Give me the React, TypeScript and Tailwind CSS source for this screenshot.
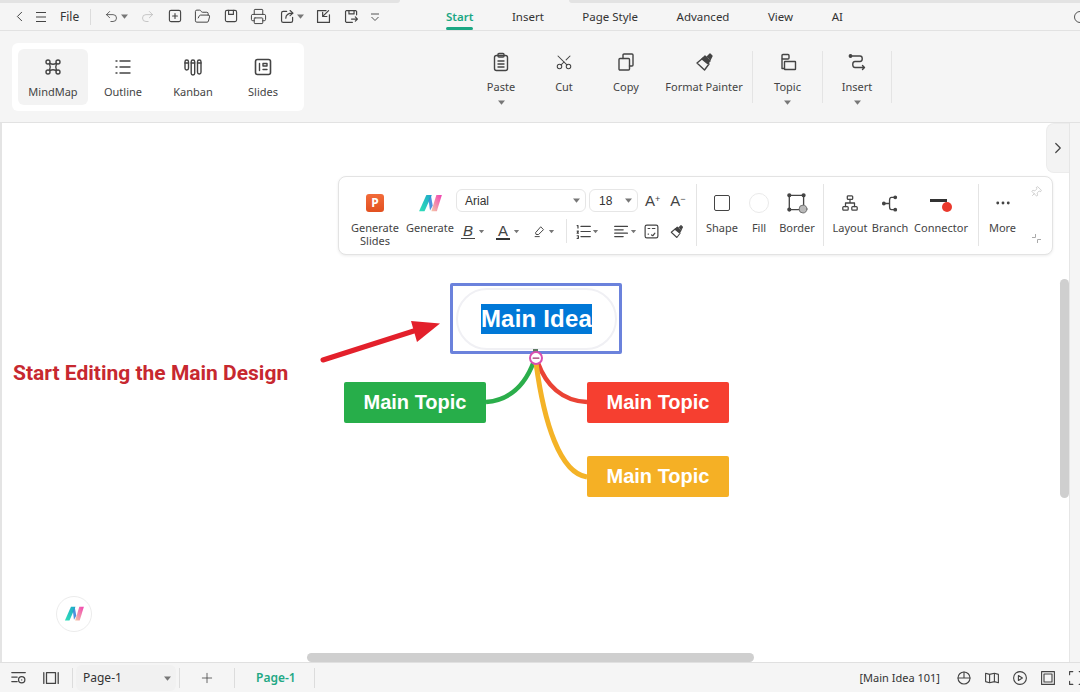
import type { ReactNode } from "react";
import {
  ChevronLeft,
  ChevronRight,
  Ellipsis,
  FolderOpen,
  Minus,
  Pin,
  Plus,
  Printer,
  Redo2,
  Scissors,
  Undo2,
} from "lucide-react";

const Caret = ({ className = "" }: { className?: string }) => (
  <svg width="7" height="5" viewBox="0 0 7 5" className={`shrink-0 ${className}`}>
    <path d="M0 0.5h7L3.5 4.8z" fill="#777" />
  </svg>
);

const Svg = ({ size = 20, children }: { size?: number; children: ReactNode }) => (
  <svg width={size} height={size} viewBox="0 0 20 20" fill="none" stroke="#444" strokeWidth="1.4" strokeLinecap="round" strokeLinejoin="round" className="shrink-0">
    {children}
  </svg>
);

const MLogo = ({ size = 26 }: { size?: number }) => (
  <svg width={size} height={size * 0.76} viewBox="0 0 26 20">
    <defs>
      <linearGradient id="mA" x1="0" y1="1" x2="1" y2="0">
        <stop offset="0" stopColor="#2fe0b8" />
        <stop offset="1" stopColor="#1fa8c8" />
      </linearGradient>
      <linearGradient id="mB" x1="0" y1="1" x2="1" y2="0">
        <stop offset="0" stopColor="#f5c8a8" />
        <stop offset="1" stopColor="#f040b0" />
      </linearGradient>
    </defs>
    <path d="M1 19 L9 1 H15 L7 19 Z" fill="url(#mA)" />
    <path d="M11.5 7 L14 1.5 L16 13 L13 18 Z" fill="#2f7fd8" opacity="0.85" />
    <path d="M14.5 19 L20 1 H26 L20.5 19 Z" fill="url(#mB)" />
  </svg>
);

const quickIcons: { id: string; node: ReactNode }[] = [
  { id: "new", node: <Svg size={16}><rect x="3" y="3" width="14" height="14" rx="2" /><path d="M10 7v6M7 10h6" /></Svg> },
  { id: "open", node: <FolderOpen size={17} strokeWidth={1.4} color="#444" /> },
  { id: "save", node: <Svg size={16}><rect x="3" y="3" width="14" height="14" rx="2" /><path d="M7 3v5h6V3" /></Svg> },
  { id: "print", node: <Printer size={17} strokeWidth={1.4} color="#444" /> },
];

const TopStrip = () => (
  <div className="flex h-[3px] shrink-0 bg-[#f5f5f5]">
    <div className="w-[400px] rounded-br-[3px] bg-[#e3e3e3]" />
    <div className="ml-[169px] flex-1 rounded-bl-[3px] bg-[#e3e3e3]" />
  </div>
);

const TitleBar = () => (
  <div className="flex h-[28px] items-center border-b border-[#e2e2e2] bg-[#f5f5f5] text-[12px] text-[#333]">
    <ChevronLeft size={17} strokeWidth={1.4} color="#444" className="ml-[11px]" />
    <svg width="12" height="12" viewBox="0 0 12 12" stroke="#444" strokeWidth="1.1" className="ml-[7px]">
      <path d="M1 1.5h10M1 6h10M1 10.5h10" />
    </svg>
    <span className="ml-[13px] w-[22px]">File</span>
    <div className="ml-[8px] h-[16px] w-px bg-[#dcdcdc]" />
    <Undo2 size={15} strokeWidth={1.3} color="#444" className="ml-[13px]" />
    <Caret className="ml-[2px]" />
    <Redo2 size={15} strokeWidth={1.3} color="#bbb" className="ml-[12px]" />
    <div className="ml-[11px] flex w-[101px] justify-between">
      {quickIcons.map((q) => (
        <span key={q.id} className="flex w-[17px] justify-center">{q.node}</span>
      ))}
    </div>
    <span className="ml-[12px] flex">
      <Svg size={17}><path d="M16 11v4a2 2 0 0 1-2 2H5a2 2 0 0 1-2-2V6a2 2 0 0 1 2-2h4" /><path d="M8 12c0-4 3-6 8-6M13 3l3.5 3L13 9" /></Svg>
    </span>
    <Caret className="ml-[1px]" />
    <span className="ml-[11px] flex">
      <Svg size={17}><path d="M3 3h10M3 3v14h14V8" /><path d="M16 3l-6 6M9 5v5h5" /></Svg>
    </span>
    <span className="ml-[11px] flex">
      <Svg size={17}><path d="M16 8V4l-1-1H4L3 4v12l1 1h7" /><path d="M7 3v4h6V3M10 13h7M14.5 10.5 17 13l-2.5 2.5" /></Svg>
    </span>
    <svg width="10" height="10" viewBox="0 0 10 10" stroke="#555" fill="none" className="ml-[10px]">
      <path d="M1 2h8M1.5 5 5 8.5 8.5 5" />
    </svg>
    <div className="ml-[66px] flex h-full gap-[38.5px] text-[11.5px]">
      {["Start", "Insert", "Page Style", "Advanced", "View", "AI"].map((tab) => (
        <span
          key={tab}
          className={
            tab === "Start"
              ? "relative flex items-center font-semibold text-[#1ba784]"
              : "flex items-center"
          }
        >
          {tab}
          {tab === "Start" && <span className="absolute bottom-0 left-0 h-[3px] w-full rounded-sm bg-[#1ba784]" />}
        </span>
      ))}
    </div>
    <span className="ml-auto -mr-[6px] h-[12px] w-[12px] rounded-full border border-[#555]" />
  </div>
);

const viewModes: { label: string; icon: ReactNode }[] = [
  {
    label: "MindMap",
    icon: (
      <Svg>
        <circle cx="5" cy="5" r="2" /><circle cx="15" cy="5" r="2" /><circle cx="5" cy="15" r="2" /><circle cx="15" cy="15" r="2" />
        <path d="M7 6.5c2 1 4 1 6 0M7 13.5c2-1 4-1 6 0M6.5 7c1 2 1 4 0 6M13.5 7c-1 2-1 4 0 6" />
      </Svg>
    ),
  },
  {
    label: "Outline",
    icon: (
      <Svg>
        <path d="M7 4h10M7 10h10M7 16h10" /><path d="M3 4h1M3 10h1M3 16h1" />
      </Svg>
    ),
  },
  {
    label: "Kanban",
    icon: (
      <Svg>
        <rect x="2" y="3" width="3.5" height="10" rx="1.7" /><rect x="8.2" y="3" width="3.5" height="15" rx="1.7" /><rect x="14.5" y="3" width="3.5" height="14" rx="1.7" />
        <path d="M2 6h3.5M8.2 6h3.5M14.5 6h3.5" />
      </Svg>
    ),
  },
  {
    label: "Slides",
    icon: (
      <Svg>
        <rect x="2.5" y="2.5" width="15" height="15" rx="2" strokeWidth="1.6" />
        <path d="M6.5 6.5v7M10 6.5h4v2.5h-4zM10 12.5h4" />
      </Svg>
    ),
  },
];

const brushPaths = (
  <>
    <path d="M3 11l6-5 6 6-4.5 6z" />
    <path d="M8 7l3-3 5 5-2.5 2.5z" fill="#444" />
    <path d="M13 5l3-3 2 2-2 4" fill="#444" />
  </>
);

const ribbonItems: { label: string; width: string; caret?: boolean; icon: ReactNode }[] = [
  {
    label: "Paste",
    width: "w-[62px]",
    caret: true,
    icon: (
      <Svg>
        <rect x="3.5" y="3.5" width="13" height="15" rx="2" />
        <rect x="7" y="1.5" width="6" height="3.5" rx="1" />
        <path d="M7 9h6M7 12h6M7 15h6" />
      </Svg>
    ),
  },
  { label: "Cut", width: "w-[64px]", icon: <Scissors size={18} strokeWidth={1.4} color="#444" className="-rotate-90" /> },
  {
    label: "Copy",
    width: "w-[60px]",
    icon: (
      <Svg>
        <rect x="3" y="6.5" width="10.5" height="11.5" rx="1" />
        <path d="M7 6.5V3a1 1 0 0 1 1-1h8a1 1 0 0 1 1 1v10a1 1 0 0 1-1 1h-2.5" />
      </Svg>
    ),
  },
  { label: "Format Painter", width: "w-[96px]", icon: <Svg>{brushPaths}</Svg> },
];

const Ribbon = () => (
  <div className="relative flex h-[92px] border-b border-[#e2e2e2] bg-[#f5f5f5]">
    <div className="ml-[12px] mt-[12px] flex h-[68px] w-[292px] rounded-md bg-white p-[6px]">
      {viewModes.map((mode, i) => (
        <div
          key={mode.label}
          className={`flex w-[70px] flex-col items-center rounded-md pt-[8px] ${i === 0 ? "bg-[#f3f3f3]" : ""}`}
        >
          {mode.icon}
          <span className="mt-[8px] text-[11px] leading-[14px] text-[#444]">{mode.label}</span>
        </div>
      ))}
    </div>
    <div className="ml-[166px] mt-[20px] flex h-[52px]">
      {ribbonItems.map((item) => (
        <RibbonButton key={item.label} {...item} />
      ))}
      <div className="h-[52px] w-px bg-[#e4e4e4]" />
      <RibbonButton
        label="Topic"
        width="w-[69px]"
        caret
        icon={
          <Svg>
            <rect x="4" y="2.5" width="7" height="4.5" rx="1" />
            <rect x="6.5" y="9.5" width="11" height="8" rx="0.5" />
            <path d="M4 7v9.5h2.5" />
          </Svg>
        }
      />
      <div className="h-[52px] w-px bg-[#e4e4e4]" />
      <RibbonButton
        label="Insert"
        width="w-[68px]"
        caret
        icon={
          <Svg>
            <circle cx="3.5" cy="4" r="1.2" fill="#444" />
            <path d="M4 4h9c3 0 3 5.5 0 5.5H8c-3 0-3 6 0 6h9M15.5 13.5l2 2-2 2" />
          </Svg>
        }
      />
      <div className="h-[52px] w-px bg-[#e4e4e4]" />
    </div>
  </div>
);

const RibbonButton = ({ label, width, caret, icon }: { label: string; width: string; caret?: boolean; icon: ReactNode }) => (
  <div className={`flex h-[60px] ${width} flex-col items-center`}>
    <span className="flex h-[22px] shrink-0 items-center">{icon}</span>
    <span className="mt-[7px] shrink-0 whitespace-nowrap text-[11px] leading-[14px] text-[#444]">{label}</span>
    {caret && <Caret className="mt-[6px]" />}
  </div>
);

const ToolColumn = ({ label, width, icon }: { label: ReactNode; width: string; icon: ReactNode }) => (
  <div className={`flex ${width} flex-col items-center pt-[14px]`}>
    <span className="flex h-[24px] items-center">{icon}</span>
    <span className="mt-[6px] whitespace-nowrap text-center text-[11px] leading-[13px] text-[#444]">{label}</span>
  </div>
);

const ToolSep = () => <div className="mt-[7px] h-[62px] w-px shrink-0 bg-[#e4e4e4]" />;

const FloatingToolbar = () => (
  <div className="absolute left-[338px] top-[53px] flex h-[79px] w-[715px] rounded-lg border border-[#e3e3e3] bg-white pl-[8px] shadow-[0_1px_3px_rgba(0,0,0,0.08)]">
    <ToolColumn
      label={<>Generate<br />Slides</>}
      width="w-[56px]"
      icon={
        <span className="flex h-[18px] w-[18px] items-center justify-center rounded-[3px] bg-gradient-to-b from-[#f26b3a] to-[#e2501f] text-[12px] font-bold text-white">P</span>
      }
    />
    <ToolColumn label="Generate" width="w-[54px]" icon={<MLogo size={24} />} />
    <div className="-ml-[1px] flex w-[240px] flex-col pt-[12px]">
      <div className="flex items-center gap-[3px]">
        <div className="flex h-[23px] w-[130px] items-center justify-between rounded-md border border-[#e6e6e6] pl-[8px] pr-[5px] text-[12px] text-[#333]" style={{ fontFamily: "Liberation Sans" }}>
          Arial
          <Caret />
        </div>
        <div className="flex h-[23px] w-[49px] items-center justify-between rounded-md border border-[#e6e6e6] pl-[9px] pr-[5px] text-[12px] text-[#333]" style={{ fontFamily: "Liberation Sans" }}>
          18
          <Caret />
        </div>
        <span className="ml-[4px] text-[15px] leading-none text-[#444]" style={{ fontFamily: "Liberation Sans" }}>A<sup className="text-[9px]">+</sup></span>
        <span className="ml-[7px] text-[15px] leading-none text-[#444]" style={{ fontFamily: "Liberation Sans" }}>A<sup className="text-[9px]">−</sup></span>
      </div>
      <div className="mt-[5px] flex h-[28px] items-center text-[#444]">
        <span className="ml-[5px] w-[14px] border-b border-[#444] text-center text-[15px] italic leading-[15px]" style={{ fontFamily: "Liberation Sans" }}>B</span>
        <Caret className="ml-[3px] scale-75" />
        <span className="ml-[11px] w-[14px] border-b-2 border-[#333] text-center text-[15px] leading-[15px]" style={{ fontFamily: "Liberation Sans" }}>A</span>
        <Caret className="ml-[3px] scale-75" />
        <span className="ml-[13px] flex">
          <Svg size={14}><path d="M4 12l7-8 4 4-7 7H5zM3 18h6" /></Svg>
        </span>
        <Caret className="ml-[1px] scale-75" />
        <div className="ml-[11px] h-[24px] w-px bg-[#e4e4e4]" />
        <span className="ml-[8px] flex">
          <Svg size={17}><path d="M7 4h11M7 10h11M7 16h11M2.5 3h1v3M2.5 9.5h1.5L2.5 12H4M2.5 15h1.5v3h-1.5" /></Svg>
        </span>
        <Caret className="scale-75" />
        <span className="ml-[14px] flex">
          <Svg size={17}><path d="M2 4h15M2 8h10M2 12h15M2 16h10" /></Svg>
        </span>
        <Caret className="scale-75" />
        <span className="ml-[6px] flex">
          <Svg size={17}><rect x="2.5" y="2.5" width="15" height="15" rx="2" /><path d="M6 6.5h2M6 13h0.5M11 6.5h3M10 14l1.5 1L14 12" /></Svg>
        </span>
        <span className="ml-[9px] flex">
          <Svg size={15}>{brushPaths}</Svg>
        </span>
      </div>
    </div>
    <ToolSep />
    <ToolColumn
      label="Shape"
      width="w-[50px]"
      icon={<span className="h-[16px] w-[16px] rounded-[2px] border-[1.5px] border-[#444]" />}
    />
    <ToolColumn label="Fill" width="w-[24px]" icon={<span className="h-[20px] w-[20px] rounded-full border border-[#eaeaea]" />} />
    <ToolColumn
      label="Border"
      width="w-[52px]"
      icon={
        <Svg size={22}>
          <rect x="3" y="3" width="13" height="13" strokeWidth="1.2" />
          <circle cx="3" cy="3" r="1.2" fill="#444" /><circle cx="16" cy="3" r="1.2" fill="#444" /><circle cx="3" cy="16" r="1.2" fill="#444" />
          <circle cx="15.5" cy="15.5" r="3.6" fill="#b9b9b9" stroke="#666" strokeWidth="0.8" />
        </Svg>
      }
    />
    <ToolSep />
    <ToolColumn
      label="Layout"
      width="w-[52px]"
      icon={
        <Svg size={18}>
          <rect x="7" y="2" width="6" height="4" rx="1" />
          <rect x="2" y="14" width="6" height="4" rx="1" />
          <rect x="12" y="14" width="6" height="4" rx="1" />
          <path d="M10 6v4M5 14v-4h10v4" />
        </Svg>
      }
    />
    <ToolColumn
      label="Branch"
      width="w-[28px]"
      icon={
        <Svg size={19}>
          <circle cx="3" cy="10" r="1.3" fill="#444" /><circle cx="15" cy="3.5" r="1.3" fill="#444" /><circle cx="15" cy="16.5" r="1.3" fill="#444" />
          <path d="M4 10h5M14 3.5h-3c-2 0-2 2-2 3v7c0 1 0 3 2 3h3" />
        </Svg>
      }
    />
    <ToolColumn
      label="Connector"
      width="w-[74px]"
      icon={
        <span className="relative block h-[18px] w-[22px]">
          <span className="absolute left-0 top-[5px] h-[2.5px] w-[17px] bg-[#333]" />
          <span className="absolute left-[12px] top-[8px] h-[10px] w-[10px] rounded-full bg-[#ea3a2d]" />
        </span>
      }
    />
    <ToolSep />
    <ToolColumn label="More" width="w-[47px]" icon={<Ellipsis size={18} strokeWidth={1.8} color="#444" />} />
    <div className="flex w-[20px] flex-col items-center justify-between pb-[10px] pt-[9px]">
      <Pin size={12} strokeWidth={1.2} color="#b5b5b5" className="rotate-45" />
      <svg width="11" height="11" viewBox="0 0 11 11" stroke="#aaa" fill="none">
        <path d="M1 4.5h3.5V1M6.5 10V6.5H10" />
      </svg>
    </div>
  </div>
);

// nodes sit on the free canvas, so they keep their canvas coordinates
const Topic = ({ className }: { className: string }) => (
  <div
    className={`absolute flex h-[41px] w-[142px] items-center justify-center rounded-[2px] pb-[1px] text-[20px] font-bold text-white ${className}`}
    style={{ fontFamily: "Liberation Sans" }}
  >
    Main Topic
  </div>
);

const Canvas = () => (
  <div className="relative flex-1 overflow-hidden border-l-2 border-[#e4e4e4] bg-white">
    <div className="absolute -left-[2px] top-0 h-full w-[1080px]">
      <svg width="1080" height="539" className="absolute left-0 top-0" fill="none">
        <path d="M486 279 C512 277 526 260 534 238" stroke="#2bae4b" strokeWidth="4.5" />
        <path d="M587 279 C562 278 546 262 538 240" stroke="#ea4335" strokeWidth="4.5" />
        <path d="M587 354 C560 350 544 300 536 240" stroke="#f4b327" strokeWidth="5" />
        <path d="M323 237 L420 206" stroke="#e3202b" strokeWidth="5" strokeLinecap="round" />
        <path d="M440 200.5 L411 198 L417 219 Z" fill="#e3202b" />
      </svg>

      <span className="absolute left-[13px] top-[236px] whitespace-nowrap text-[21px] font-bold leading-[28px] text-[#c7282f]" style={{ fontFamily: "Roboto" }}>
        Start Editing the Main Design
      </span>

      <div className="absolute left-[450px] top-[160px] flex h-[71px] w-[172px] items-center justify-center rounded-[2px] border-[3px] border-[#6b82dc]">
        <div className="flex h-[62px] w-[161px] items-center justify-center rounded-full border-2 border-[#f0f0f4] pl-[1px]">
          <span className="bg-[#0078d7] text-[24px] font-bold leading-[30px] tracking-[0.2px] text-white" style={{ fontFamily: "Liberation Sans" }}>
            Main Idea
          </span>
        </div>
      </div>
      <div className="absolute left-[533px] top-[226px] h-[4px] w-[5px] bg-[#5f7a64]" />
      <div className="absolute left-[529px] top-[228px] flex h-[14px] w-[14px] items-center justify-center rounded-full border-2 border-[#d94fb0] bg-white">
        <Minus size={10} strokeWidth={3} color="#a0306f" />
      </div>

      <Topic className="left-[344px] top-[259px] bg-[#27ae4a]" />
      <Topic className="left-[587px] top-[259px] bg-[#f63f30]" />
      <Topic className="left-[587px] top-[333px] bg-[#f5b025]" />

      <div className="absolute left-[56px] top-[473px] flex h-[36px] w-[36px] items-center justify-center rounded-full border border-[#ececec] bg-white">
        <MLogo size={20} />
      </div>

      <FloatingToolbar />

      {/* right rail, collapse tab and scrollbars */}
      <div className="absolute right-0 top-0 h-full w-[11px] border-l border-[#e6e6e6] bg-[#f5f5f5]" />
      <div className="absolute left-[1046px] top-0 flex h-[50px] w-[23px] items-center justify-center rounded-l-lg border border-r-0 border-[#ececec] bg-[#f3f3f3]">
        <ChevronRight size={18} strokeWidth={1.6} color="#444" />
      </div>
      <div className="absolute left-[1060px] top-[156px] h-[219px] w-[9px] rounded-full bg-[#cfcfcf]" />
      <div className="absolute bottom-0 left-[307px] h-[9px] w-[447px] rounded-full bg-[#cfcfcf]" />
    </div>
  </div>
);

const StatusBar = () => (
  <div className="flex h-[30px] items-center border-t border-[#e0e0e0] bg-[#f5f5f5] pt-[1px] text-[12px] text-[#333]">
    <span className="ml-[10px] flex">
      <Svg size={18}><path d="M2 4h15M2 9h6M2 14h6" /><circle cx="13" cy="12" r="3.5" /><path d="M13 12v0.1" /></Svg>
    </span>
    <span className="ml-[14px] flex">
      <Svg size={18}><path d="M2 4v12M18 4v12" /><rect x="5" y="4" width="10" height="12" /></Svg>
    </span>
    <div className="ml-[12px] h-[20px] w-px bg-[#dcdcdc]" />
    <div className="ml-[3px] flex h-[26px] w-[100px] items-center justify-between rounded-md bg-[#f1f1f1] pl-[7px] pr-[5px]">
      Page-1
      <Caret />
    </div>
    <div className="ml-[3px] h-[20px] w-px bg-[#dcdcdc]" />
    <Plus size={16} strokeWidth={1.2} color="#444" className="ml-[19px]" />
    <div className="ml-[19px] h-[20px] w-px bg-[#dcdcdc]" />
    <span className="ml-[21px] font-semibold text-[#22a884]">Page-1</span>
    <div className="ml-[18px] h-[20px] w-px bg-[#dcdcdc]" />
    <span className="ml-auto whitespace-nowrap text-[11px]">[Main Idea 101]</span>
    <div className="ml-[16px] flex w-[124px] items-center gap-[12px] overflow-hidden">
      <Svg size={16}><circle cx="10" cy="10" r="7.5" /><path d="M2.5 10H17.5M10 10V2.5" /></Svg>
      <Svg size={16}><path d="M2 4l5 1.5L13 4l5 1.5V16l-5-1.5L7 16l-5-1.5zM7 5.5V16M13 4v10.5" /></Svg>
      <Svg size={16}><circle cx="10" cy="10" r="8" /><path d="M8 7l5 3-5 3z" /></Svg>
      <Svg size={16}><rect x="2" y="2" width="16" height="16" /><rect x="5" y="5" width="10" height="10" /></Svg>
      <Svg size={16}><path d="M2 6V2h4M14 2h4v4M18 14v4h-4M6 18H2v-4" /></Svg>
    </div>
  </div>
);

export default function App() {
  return (
    <div className="flex h-[692px] w-[1080px] flex-col overflow-hidden bg-[#f5f5f5]" style={{ fontFamily: "'Noto Sans', sans-serif" }}>
      <TopStrip />
      <TitleBar />
      <Ribbon />
      <Canvas />
      <StatusBar />
    </div>
  );
}
